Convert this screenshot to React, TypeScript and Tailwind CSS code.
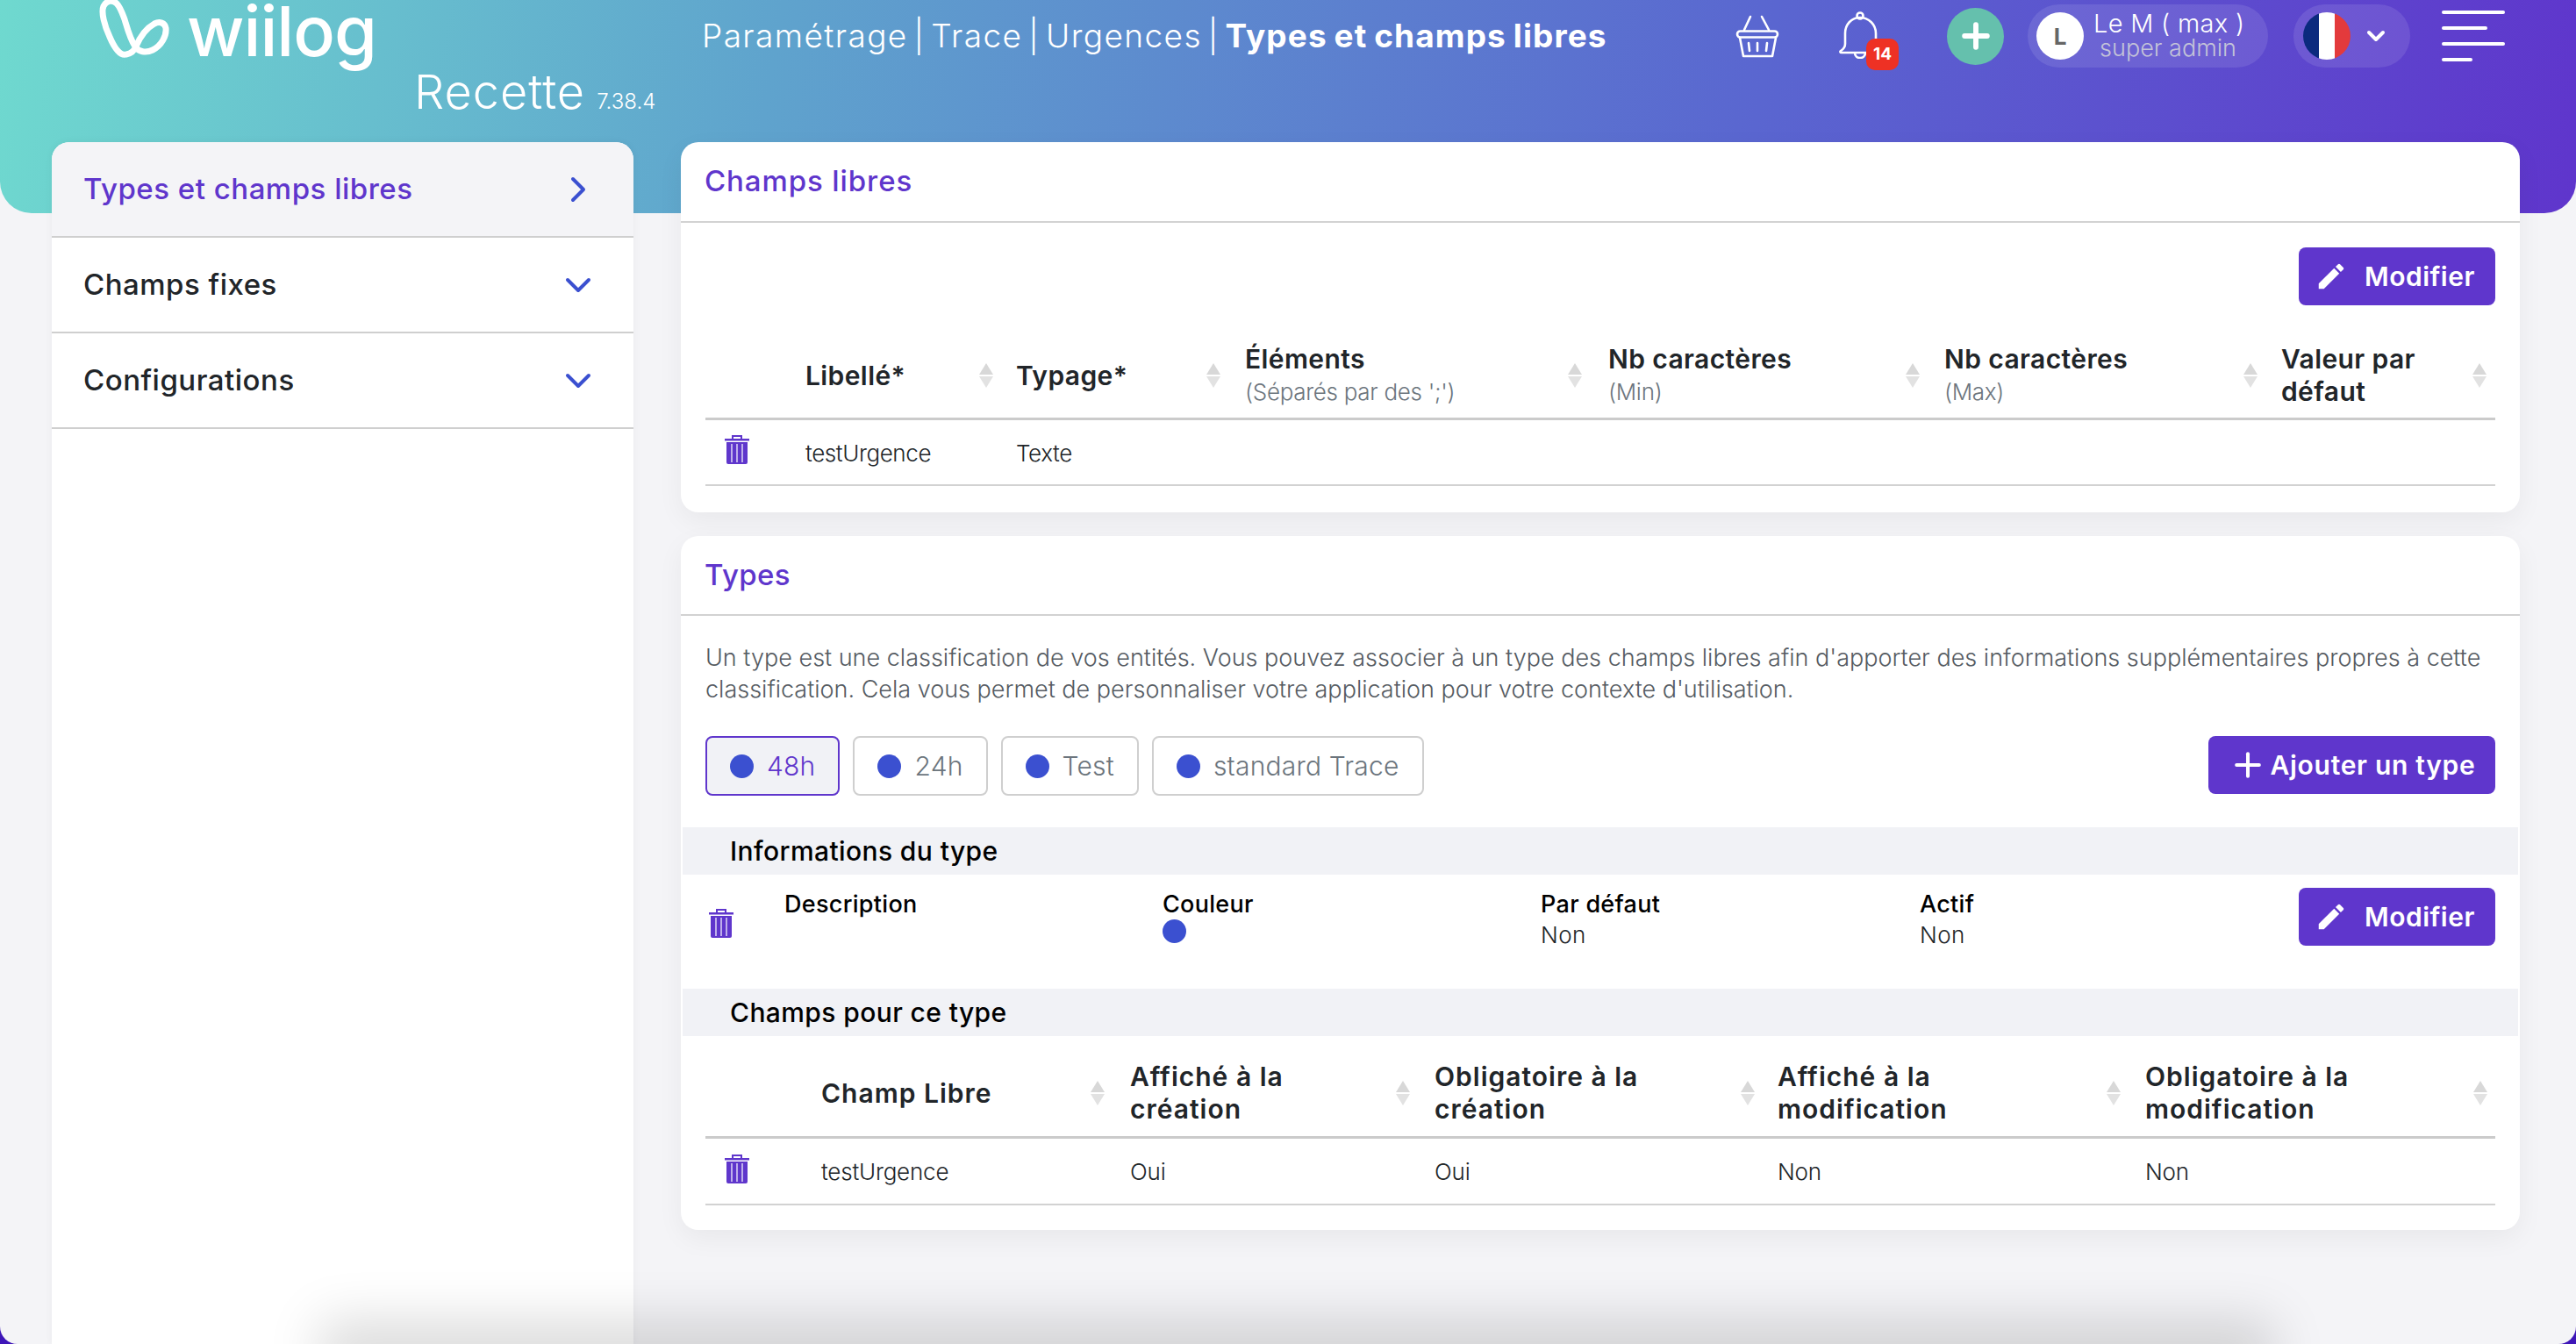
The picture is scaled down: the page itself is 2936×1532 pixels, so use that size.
import { ChevronDown, ChevronRight, Plus } from 'lucide-react'

function SortIcon() {
  return (
    <svg width="16" height="28" viewBox="0 0 16 28" className="shrink-0">
      <path d="M8 0l8 13H0z" fill="#d8d8d8" />
      <path d="M0 15h16L8 28z" fill="#e2e2e2" />
    </svg>
  )
}

function TrashIcon() {
  return (
    <svg width="28" height="33" viewBox="0 0 28 33">
      <path d="M9 4V1h10v3" fill="none" stroke="#5f36cc" strokeWidth="2" />
      <rect x="0" y="4" width="28" height="2.5" fill="#5f36cc" />
      <path d="M2 8h24v23a2 2 0 0 1-2 2H4a2 2 0 0 1-2-2z" fill="#5f36cc" />
      <path d="M8 10v21M14 10v21M20 10v21" stroke="#fff" strokeWidth="1.2" />
    </svg>
  )
}

function PencilIcon() {
  return (
    <svg width="38" height="38" viewBox="0 0 24 24" fill="#fff" className="shrink-0">
      <path d="M3 17.25V21h3.75L17.81 9.94l-3.75-3.75L3 17.25zM20.71 7.04a1 1 0 0 0 0-1.41l-2.34-2.34a1 1 0 0 0-1.41 0l-1.83 1.83 3.75 3.75 1.83-1.83z" />
    </svg>
  )
}

function Logo() {
  return (
    <svg width="84" height="70" viewBox="112 0 84 70" className="shrink-0">
      <path
        d="M145 62c-7 2-13-6-19-20-6-13-10-28-7-35 3-6 10-8 15-3 4 4 6 10 9 18 3 10 6 22 12 31 4 6 12 8 20 4 10-5 16-16 15-25-1-6-7-8-13-5-9 5-16 14-21 26-2 5-5 8-11 9z"
        fill="none"
        stroke="#fff"
        strokeWidth="7"
      />
    </svg>
  )
}

function BasketIcon() {
  return (
    <svg width="50" height="49" viewBox="1978 16 50 49" fill="none" stroke="#fff" strokeWidth="2.6" strokeLinecap="round" strokeLinejoin="round">
      <path d="M1995 18l-7 15M2008 18l8 15" />
      <rect x="1980" y="34.5" width="46" height="7" rx="3.5" />
      <path d="M1983 42l4 21h33l4-21" />
      <path d="M1993 48l1 9M2003 48v9M2014 48l-1 9" />
    </svg>
  )
}

function BellIcon() {
  return (
    <svg width="50" height="54" viewBox="2095 13 50 54" fill="none" stroke="#fff" strokeWidth="2.6" strokeLinejoin="round" className="mt-[5px] -ml-[2px]">
      <path d="M2120 20c-10 0-17 8-17 18v12c0 4-2 6-5 8-1 1-1 2 1 2h42c2 0 2-1 1-2-3-2-4-4-4-8V38c0-10-8-18-18-18z" />
      <circle cx="2120" cy="18" r="3.5" />
      <path d="M2114 60c0 8 12 8 12 0" />
    </svg>
  )
}

function Modifier() {
  return (
    <button className="flex h-[66px] w-[224px] items-center rounded-lg bg-[#5f36cc] pl-[18px] text-[30px] font-semibold tracking-[0.5px] text-white">
      <PencilIcon />
      <span className="ml-[19px]">Modifier</span>
    </button>
  )
}

function SectionBar({ label }: { label: string }) {
  return (
    <div className="mx-[2px] flex h-[54px] items-center bg-[#f1f2f6] pl-[54px] text-[30px] font-medium tracking-[0.4px] text-black">
      {label}
    </div>
  )
}

function HeadCell({ pr, wide, children }: { pr: string; wide?: boolean; children: React.ReactNode }) {
  return (
    <div className={`flex items-center justify-between text-[30px] leading-[37px] font-semibold text-[#212529] ${wide ? 'tracking-[1px]' : 'tracking-[0.4px]'} ${pr}`}>
      <div>{children}</div>
      <SortIcon />
    </div>
  )
}

function Sub({ children }: { children: React.ReactNode }) {
  return <div className="text-[26px] font-light tracking-[-0.3px] text-[#6c757d]">{children}</div>
}

function TypeTab({ label, active }: { label: string; active?: boolean }) {
  return (
    <div
      className={`flex h-[68px] items-center gap-[15px] rounded-lg border-2 px-[26px] text-[30px] font-light tracking-[0.2px] ${
        active ? 'border-[#5f36cc] bg-[#f1f2f6] text-[#5f36cc]' : 'border-[#cfcfcf] bg-white text-[#6c757d]'
      }`}
    >
      <span className="h-[27px] w-[27px] rounded-full bg-[#3b50d0]" />
      {label}
    </div>
  )
}

function InfoCol({ title, className, children }: { title: string; className: string; children?: React.ReactNode }) {
  return (
    <div className={className}>
      <div className="text-[27px] leading-[34px] font-medium tracking-[0.3px] text-black">{title}</div>
      {children}
    </div>
  )
}

function SideRow({ label, active }: { label: string; active?: boolean }) {
  return (
    <div
      className={`flex h-[109px] items-center justify-between border-b-2 border-[#cfcfcf] pr-[39px] pl-[36px] text-[33px] font-medium tracking-[0.5px] ${
        active ? 'bg-[#f4f4f7] text-[#5f36cc]' : 'bg-white text-[#212529]'
      }`}
    >
      {label}
      {active ? (
        <ChevronRight size={48} strokeWidth={2} className="text-[#3b50d0]" />
      ) : (
        <ChevronDown size={48} strokeWidth={2} className="text-[#3b50d0]" />
      )}
    </div>
  )
}

export default function App() {
  return (
    <div className="h-[1532px] overflow-hidden bg-[#3e16b8] font-['Inter',sans-serif]">
      <div className="relative h-[1532px] overflow-hidden rounded-b-[20px] bg-[#f4f4f7]">
        {/* Header */}
        <header className="flex h-[243px] items-start rounded-b-[36px] bg-[linear-gradient(100deg,#6fd9cf_0%,#5fa3cd_30%,#5a66d0_68%,#5f35cc_100%)] text-white">
          <div className="w-[800px] shrink-0 pl-[111px]">
            <div className="flex h-[70px] items-center gap-[18px]">
              <Logo />
              <span className="text-[79px] leading-[70px] font-medium tracking-[-1px]">wiilog</span>
            </div>
            <div className="mt-[8px] ml-[361px] flex items-baseline gap-[13px] font-light whitespace-nowrap">
              <span className="text-[54px] leading-[54px] tracking-[1px]">Recette</span>
              <span className="text-[24px]">7.38.4</span>
            </div>
          </div>
          <div className="flex h-[82px] items-center text-[37px] font-light tracking-[1.4px] whitespace-nowrap [word-spacing:-5px]">
            Paramétrage | Trace | Urgences |&nbsp;<span className="font-bold tracking-[1.1px] [word-spacing:-2px]">Types et champs libres</span>
          </div>
          <div className="ml-auto flex h-[82px] items-center pr-[81px]">
            <div className="-ml-[2px]"><BasketIcon /></div>
            <div className="relative ml-[69px] h-[66px] w-[67px]">
              <BellIcon />
              <span className="absolute top-[36px] right-0 flex h-[36px] w-[37px] items-center justify-center rounded-[10px] bg-[#ee3124] text-[19px] font-bold">14</span>
            </div>
            <div className="ml-[55px] flex h-[65px] w-[65px] items-center justify-center rounded-full bg-[#65c0ad]">
              <Plus size={44} strokeWidth={3.2} />
            </div>
            <div className="ml-[27px] flex h-[72px] w-[274px] items-center rounded-full bg-white/10 pl-[10px]">
              <div className="flex h-[54px] w-[54px] items-center justify-center rounded-full bg-white text-[26px] font-bold text-[#666]">L</div>
              <div className="ml-[11px] w-[170px] text-center leading-none font-light whitespace-nowrap">
                <div className="text-[29px] leading-[28px] tracking-[0.3px]">Le M ( max )</div>
                <div className="text-[27px] leading-[28px] text-[#c4c4d8]">super admin</div>
              </div>
            </div>
            <div className="ml-[29px] flex h-[72px] w-[133px] items-center rounded-full bg-white/10 pl-[11px]">
              <div className="flex h-[54px] w-[54px] overflow-hidden rounded-full">
                <span className="flex-1 bg-[#0b2a7e]" />
                <span className="flex-1 bg-white" />
                <span className="flex-1 bg-[#e33a3c]" />
              </div>
              <ChevronDown size={32} strokeWidth={3} className="ml-[13px]" />
            </div>
            <div className="ml-[36px] flex w-[72px] flex-col gap-[14px]">
              <span className="h-[4px] w-[72px] rounded-full bg-white" />
              <span className="h-[4px] w-[52px] rounded-full bg-white" />
              <span className="h-[4px] w-[72px] rounded-full bg-white" />
              <span className="h-[4px] w-[35px] rounded-full bg-white" />
            </div>
          </div>
        </header>

        {/* Body */}
        <div className="relative -mt-[81px] flex h-[1370px] gap-[54px] pr-[64px] pl-[59px]">
          <aside className="w-[663px] shrink-0 overflow-hidden rounded-t-[20px] bg-white shadow-[0_0_10px_rgba(0,0,0,0.05)]">
            <SideRow label="Types et champs libres" active />
            <SideRow label="Champs fixes" />
            <SideRow label="Configurations" />
          </aside>

          <main className="flex min-w-0 flex-1 flex-col gap-[27px]">
            {/* Champs libres */}
            <section className="h-[422px] rounded-[20px] bg-white shadow-[0_10px_30px_rgba(0,0,0,0.05)]">
              <h2 className="flex h-[92px] items-center border-b-2 border-[#d2d2d2] pl-[27px] text-[33px] font-medium tracking-[0.9px] text-[#5f36cc]">Champs libres</h2>
              <div className="px-[28px]">
                <div className="mt-[28px] flex justify-end">
                  <Modifier />
                </div>
                <div className="grid h-[131px] grid-cols-[114px_240px_261px_414px_383px_384px_244px] items-stretch border-b-[3px] border-[#cbcbcb] pt-[40px] pb-[8px]">
                  <div />
                  <HeadCell pr="pr-[26px]">Libellé*</HeadCell>
                  <HeadCell pr="pr-[28px]">Typage*</HeadCell>
                  <HeadCell pr="pr-[30px]">Éléments<Sub>(Séparés par des ';')</Sub></HeadCell>
                  <HeadCell pr="pr-[28px]">Nb caractères<Sub>(Min)</Sub></HeadCell>
                  <HeadCell pr="pr-[27px]">Nb caractères<Sub>(Max)</Sub></HeadCell>
                  <HeadCell pr="pr-[10px]">Valeur par<br />défaut</HeadCell>
                </div>
                <div className="grid h-[75px] grid-cols-[114px_240px_261px_1425px] items-center border-b-2 border-[#d2d2d2] pt-[2px] text-[26px] font-light tracking-[-0.4px] text-[#212529]">
                  <div className="pb-[8px] pl-[22px]"><TrashIcon /></div>
                  <div>testUrgence</div>
                  <div>Texte</div>
                  <div />
                </div>
              </div>
            </section>

            {/* Types */}
            <section className="h-[791px] rounded-[20px] bg-white shadow-[0_10px_30px_rgba(0,0,0,0.05)]">
              <h2 className="flex h-[91px] items-center border-b-2 border-[#d2d2d2] pl-[27px] text-[33px] font-medium tracking-[0.4px] text-[#5f36cc]">Types</h2>
              <p className="mt-[30px] px-[28px] text-[27px] leading-[36px] font-light text-[#555b62]">
                Un type est une classification de vos entités. Vous pouvez associer à un type des champs libres afin d'apporter des informations supplémentaires propres à cette classification. Cela vous permet de personnaliser votre application pour votre contexte d'utilisation.
              </p>
              <div className="mt-[35px] flex items-start gap-[15px] px-[28px]">
                <TypeTab label="48h" active />
                <TypeTab label="24h" />
                <TypeTab label="Test" />
                <TypeTab label="standard Trace" />
                <button className="ml-auto flex h-[66px] w-[327px] items-center justify-center gap-[4px] rounded-lg bg-[#5f36cc] text-[30px] font-semibold tracking-[0.7px] text-white">
                  <Plus size={44} strokeWidth={2.2} />
                  Ajouter un type
                </button>
              </div>
              <div className="mt-[36px]">
                <SectionBar label="Informations du type" />
              </div>
              <div className="flex h-[130px] items-start pr-[28px] pl-[32px]">
                <div className="mt-[39px] w-[86px] shrink-0"><TrashIcon /></div>
                <InfoCol title="Description" className="mt-[17px] w-[431px] shrink-0" />
                <InfoCol title="Couleur" className="mt-[17px] w-[431px] shrink-0">
                  <span className="block h-[27px] w-[27px] rounded-full bg-[#3b50d0]" />
                </InfoCol>
                <InfoCol title="Par défaut" className="mt-[17px] w-[432px] shrink-0">
                  <div className="pt-[1px] text-[26px] leading-[34px] font-light tracking-[0.4px] text-[#212529]">Non</div>
                </InfoCol>
                <InfoCol title="Actif" className="mt-[17px] shrink-0">
                  <div className="pt-[1px] text-[26px] leading-[34px] font-light tracking-[0.4px] text-[#212529]">Non</div>
                </InfoCol>
                <div className="mt-[15px] ml-auto"><Modifier /></div>
              </div>
              <SectionBar label="Champs pour ce type" />
              <div className="px-[28px]">
                <div className="grid h-[117px] grid-cols-[132px_352px_347px_391px_419px_399px] items-stretch border-b-[3px] border-[#cbcbcb] pt-[24px] pb-[8px]">
                  <div />
                  <HeadCell wide pr="pr-[29px]">Champ Libre</HeadCell>
                  <HeadCell wide pr="pr-[28px]">Affiché à la<br />création</HeadCell>
                  <HeadCell wide pr="pr-[26px]">Obligatoire à la<br />création</HeadCell>
                  <HeadCell wide pr="pr-[28px]">Affiché à la<br />modification</HeadCell>
                  <HeadCell wide pr="pr-[9px]">Obligatoire à la<br />modification</HeadCell>
                </div>
                <div className="grid h-[76px] grid-cols-[132px_352px_347px_391px_419px_399px] items-center border-b-2 border-[#d2d2d2] text-[26px] font-light tracking-[-0.2px] text-[#212529]">
                  <div className="pb-[5px] pl-[22px]"><TrashIcon /></div>
                  <div>testUrgence</div>
                  <div>Oui</div>
                  <div>Oui</div>
                  <div>Non</div>
                  <div>Non</div>
                </div>
              </div>
            </section>
          </main>
        </div>

        {/* Shadow of the element sitting just under the fold */}
        <div className="pointer-events-none absolute top-[1532px] right-[365px] left-[385px] h-[30px] shadow-[0_-6px_60px_20px_rgba(0,0,0,0.15)]" />
      </div>
    </div>
  )
}
